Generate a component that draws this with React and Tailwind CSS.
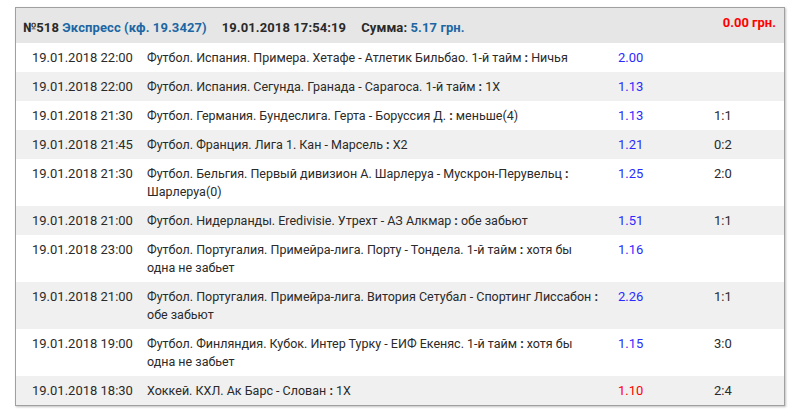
import React from 'react';

const rows = [
  { date: '19.01.2018 22:00', event: 'Футбол. Испания. Примера. Хетафе - Атлетик Бильбао. 1-й тайм', pick: 'Ничья', odds: '2.00', score: '' },
  { date: '19.01.2018 22:00', event: 'Футбол. Испания. Сегунда. Гранада - Сарагоса. 1-й тайм', pick: '1X', odds: '1.13', score: '' },
  { date: '19.01.2018 21:30', event: 'Футбол. Германия. Бундеслига. Герта - Боруссия Д.', pick: 'меньше(4)', odds: '1.13', score: '1:1' },
  { date: '19.01.2018 21:45', event: 'Футбол. Франция. Лига 1. Кан - Марсель', pick: 'X2', odds: '1.21', score: '0:2' },
  { date: '19.01.2018 21:30', event: 'Футбол. Бельгия. Первый дивизион А. Шарлеруа - Мускрон-Перувельц', pick: 'Шарлеруа(0)', odds: '1.25', score: '2:0' },
  { date: '19.01.2018 21:00', event: 'Футбол. Нидерланды. Eredivisie. Утрехт - АЗ Алкмар', pick: 'обе забьют', odds: '1.51', score: '1:1' },
  { date: '19.01.2018 23:00', event: 'Футбол. Португалия. Примейра-лига. Порту - Тондела. 1-й тайм', pick: 'хотя бы одна не забьет', odds: '1.16', score: '' },
  { date: '19.01.2018 21:00', event: 'Футбол. Португалия. Примейра-лига. Витория Сетубал - Спортинг Лиссабон', pick: 'обе забьют', odds: '2.26', score: '1:1' },
  { date: '19.01.2018 19:00', event: 'Футбол. Финляндия. Кубок. Интер Турку - ЕИФ Екеняс. 1-й тайм', pick: 'хотя бы одна не забьет', odds: '1.15', score: '3:0' },
  { date: '19.01.2018 18:30', event: 'Хоккей. КХЛ. Ак Барс - Слован', pick: '1X', odds: '1.10', score: '2:4', lost: true },
];

const BetRow = ({ row, odd }) => (
  <div className={`grid grid-cols-[131px_471px_96px_1fr] pt-[6px] pb-[5px] leading-[18px] ${odd ? 'bg-[#f0f0f0]' : 'bg-white'}`}>
    <div className="pl-4">{row.date}</div>
    <div className="pr-[18px] text-[12.5px]">
      {row.event}{'\u00a0'}<b className="font-bold">:</b> {row.pick}
    </div>
    <div className={row.lost ? 'text-[#ff0000]' : 'text-[#2b2bff]'}>{row.odds}</div>
    <div>{row.score}</div>
  </div>
);

export default function App() {
  return (
    <div className="bg-white min-h-[411px] pt-[7px] pl-[15px]" style={{ fontFamily: 'Roboto, "Liberation Sans", sans-serif' }}>
      <div className="w-[770px] border border-[#a0a0a0] shadow-[1px_1px_2px_rgba(0,0,0,0.25)] text-[13px] text-[#2a2a2a]">
        <div className="flex justify-between bg-[#e6e6e6] h-[35px] pl-[7px] pr-[8px] font-bold">
          <div className="pt-[10px] flex gap-[15px] tracking-[0.1px]">
            <span>
              №518 <span className="text-[#1c66a4]">Экспресс (кф. 19.3427)</span>
            </span>
            <span>19.01.2018 17:54:19</span>
            <span>
              Сумма: <span className="text-[#1c66a4]">5.17 грн.</span>
            </span>
          </div>
          <div className="pt-[5px] text-[#ff0000]">0.00 грн.</div>
        </div>
        {rows.map((row, i) => (
          <BetRow key={i} row={row} odd={i % 2 === 1} />
        ))}
      </div>
    </div>
  );
}
